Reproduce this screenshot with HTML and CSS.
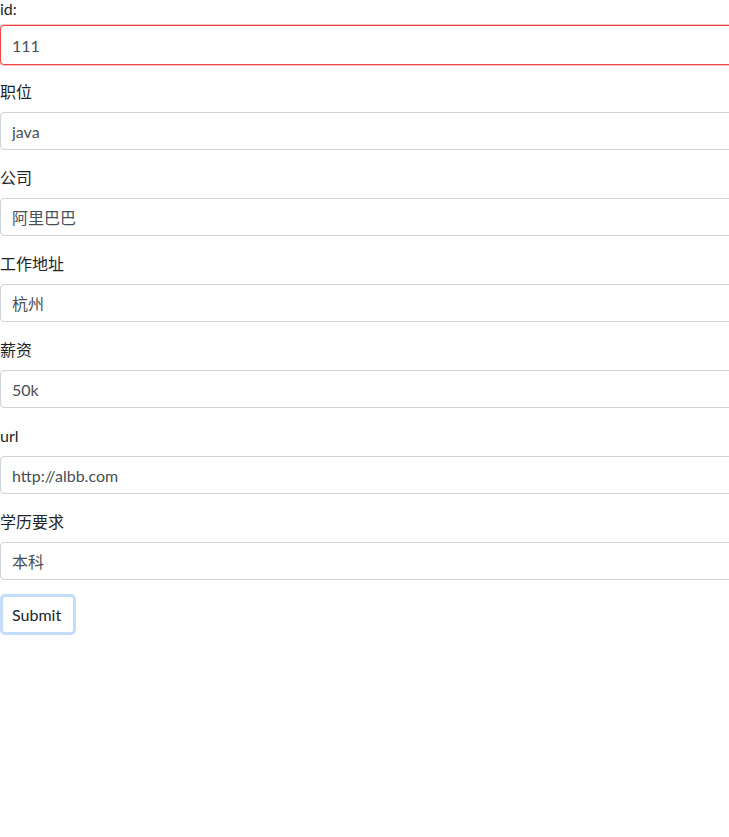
FILE: index.html
```html
<!DOCTYPE html>
<html lang="zh">
<head>
    <meta charset="UTF-8">
    <meta name="viewport" content="width=device-width, initial-scale=1.0">
    <title>职位</title>
    <link rel="stylesheet" href="styles.css">
</head>
<body>

<form class="job-form">
    <div class="form-group first">
        <label for="id">id:</label>
        <input type="text" id="id" class="form-control invalid" value="111">
    </div>
    <div class="form-group">
        <label for="title">职位</label>
        <input type="text" id="title" class="form-control" value="java">
    </div>
    <div class="form-group">
        <label for="company">公司</label>
        <input type="text" id="company" class="form-control" value="阿里巴巴">
    </div>
    <div class="form-group">
        <label for="address">工作地址</label>
        <input type="text" id="address" class="form-control" value="杭州">
    </div>
    <div class="form-group">
        <label for="salary">薪资</label>
        <input type="text" id="salary" class="form-control" value="50k">
    </div>
    <div class="form-group">
        <label for="url">url</label>
        <input type="text" id="url" class="form-control" value="http://albb.com">
    </div>
    <div class="form-group">
        <label for="edu">学历要求</label>
        <input type="text" id="edu" class="form-control" value="本科">
    </div>
    <button type="button" class="btn">Submit</button>
</form>

</body>
</html>
```

FILE: styles.css
```css
* {
    margin: 0;
    padding: 0;
    box-sizing: border-box;
}

html,
body {
    overflow: hidden;
}

body {
    font-family: Lato, "Noto Sans CJK SC", sans-serif;
    font-size: 16px;
    line-height: 24px;
    color: #212529;
    background: #fff;
}

.job-form {
    padding-top: 1px;
    margin-top: -4px;
}

.form-group {
    margin-bottom: 16px;
}

.form-group label {
    display: block;
    margin-bottom: 8px;
}

.form-group.first label {
    margin-bottom: 4px;
}

.form-control {
    display: block;
    width: 760px;
    height: 38px;
    padding: 6px 11px;
    font: inherit;
    color: #495057;
    background: #fff;
    border: 1px solid #ced4da;
    border-radius: 4px;
    outline: none;
}

.form-control.invalid {
    height: 40px;
    margin-bottom: -1px;
    border-color: #ef4444;
    box-shadow: 0 0 0 1px rgba(239, 68, 68, 0.35);
}

.btn {
    display: block;
    margin-top: -2px;
    height: 41px;
    padding: 0 12px 0 9px;
    font: inherit;
    color: #212529;
    background: #fff;
    border: 3px solid #c4ddfd;
    border-radius: 5px;
}
```
